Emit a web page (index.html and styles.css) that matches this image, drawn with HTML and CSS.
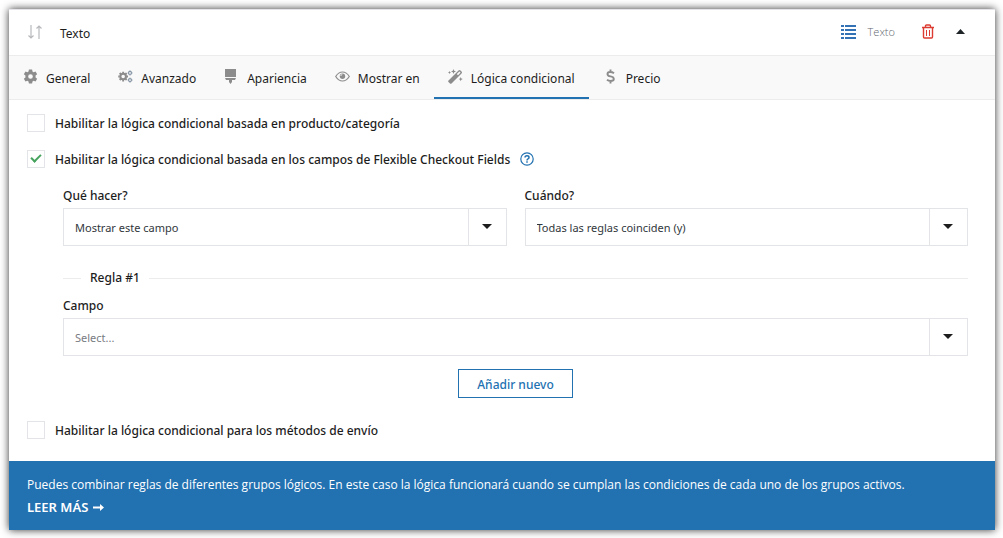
FILE: index.html
```html
<!DOCTYPE html>
<html lang="es">
<head>
    <meta charset="UTF-8">
    <meta name="viewport" content="width=device-width, initial-scale=1.0">
    <title>Flexible Checkout Fields</title>
    <link rel="stylesheet" href="styles.css">
</head>
<body>

<div class="field-card">
    <header class="field-header">
        <svg class="sort-icon" viewBox="0 0 16 16" width="16" height="16" fill="none" stroke="#b8b9bc">
            <path d="M4 1v13M1.500 11.500l2.500 2.500 2.500-2.500M12 15V2M9.500 4.500L12 2l2.500 2.500" stroke-width="1.200"/>
        </svg>
        <span class="field-name">Texto</span>
        <svg class="list-icon" viewBox="0 0 15 15" width="15" height="15" fill="#3372b5">
            <path d="M0 1h3v2H0zM4 1h11v2H4zM0 5h3v2H0zM4 5h11v2H4zM0 9h3v2H0zM4 9h11v2H4zM0 13h3v2H0zM4 13h11v2H4z"/>
        </svg>
        <span class="field-type">Texto</span>
        <button class="icon-btn delete-btn" type="button" aria-label="Eliminar">
            <svg viewBox="0 0 14 15" width="14" height="15" fill="none" stroke="#dc3c32">
                <path d="M1 3.500h12M4.500 3V2q0-1 1-1h3q1 0 1 1v1" stroke-width="1.400"/>
                <path d="M2.500 4v9q0 1 1 1h7q1 0 1-1V4" stroke-width="1.400"/>
                <path d="M5.500 6v6M8.500 6v6"/>
            </svg>
        </button>
        <button class="icon-btn" type="button" aria-label="Cerrar">
            <svg viewBox="0 0 9 5" width="9" height="5" fill="#1d2327"><path d="M0 5L4.500 0 9 5z"/></svg>
        </button>
    </header>

    <nav class="tabs">
        <a class="tab" href="#general">
            <svg viewBox="0 0 16 16" width="15" height="15" fill="#8c8c8c">
                <path fill-rule="evenodd" d="M6.300.5h3.400l.4 2.200 1.200.7 2.100-.8 1.700 2.900L13.400 7v2l1.700 1.500-1.700 2.900-2.100-.8-1.200.7-.4 2.200H6.300l-.4-2.200-1.200-.7-2.100.8-1.700-2.900L2.600 9V7L.9 5.500l1.700-2.900 2.100.8 1.200-.7zM8 5.500a2.500 2.500 0 1 0 0 5 2.500 2.500 0 0 0 0-5z"/>
            </svg>
            General
        </a>
        <a class="tab" href="#avanzado">
            <svg viewBox="0 0 16 16" width="15" height="15" fill="none" stroke="#8c8c8c">
                <circle cx="5.500" cy="8" r="3" stroke-width="2.200"/>
                <path d="M5.500 2.800v1.500M5.500 11.700v1.500M.3 8h1.500M9.200 8h1.500M1.800 4.300l1.100 1.100M8.100 10.600l1.100 1.100M1.800 11.700l1.100-1.100M8.100 5.400l1.100-1.100" stroke-width="2"/>
                <circle cx="12.800" cy="4.200" r="1.600" stroke="#8796a6" stroke-width="1.300"/>
                <circle cx="12.800" cy="11.800" r="1.600" stroke="#8796a6" stroke-width="1.300"/>
                <path d="M12.800 1.500v1M12.800 6v1M10.300 4.200h1M14.500 4.200h1M12.800 9.200v1M12.800 13.500v1M10.300 11.800h1M14.500 11.800h1" stroke="#8796a6"/>
            </svg>
            Avanzado
        </a>
        <a class="tab" href="#apariencia">
            <svg viewBox="0 0 15 15" width="15" height="15" fill="#8c8c8c">
                <path d="M1 0h11v8H1zM1 9h11l-1 2H8v2l-1.500 2L5 13v-2H2z"/>
            </svg>
            Apariencia
        </a>
        <a class="tab" href="#mostrar">
            <svg viewBox="0 0 15 15" width="15" height="15" fill="none" stroke="#8c8c8c">
                <path d="M.7 7.500Q3.500 3 7.500 3t6.800 4.500Q11.500 12 7.500 12T.7 7.500z" stroke-width="1.200"/>
                <circle cx="7.500" cy="7.200" r="2.700" fill="#8c8c8c" stroke="none"/>
                <path d="M5.800 7a1.500 1.500 0 0 1 1.500-1.500" stroke="#f9f9f9" stroke-width=".8"/>
            </svg>
            Mostrar en
        </a>
        <a class="tab tab-active" href="#logica">
            <svg viewBox="0 0 15 15" width="15" height="15" fill="#8c8c8c">
                <path fill-rule="evenodd" d="M.5 11.500L10.500 1.500q1-1 2 0l1 1q1 1 0 2L3.500 14.500q-.8.700-1.500 0l-1.500-1.500q-.7-.8 0-1.500zM8.800 5l1.200 1.200L12.600 3.600 11.400 2.400z"/>
                <path d="M5.500 0l.7 1.800L8 2.500l-1.800.7L5.500 5l-.7-1.800L3 2.500l1.800-.7zM1.500 2l.5 1 1 .5-1 .5-.5 1-.5-1-1-.5 1-.5zM12.700 8l.6 1.500 1.500.6-1.500.6-.6 1.500-.6-1.500-1.500-.6 1.500-.6z"/>
            </svg>
            Lógica condicional
        </a>
        <a class="tab" href="#precio">
            <svg viewBox="0 0 15 15" width="15" height="15" fill="none" stroke="#8c8c8c" stroke-width="1.900">
                <path d="M11 4.200Q9.500 3 7 3 4.500 3 4.500 5T7.500 7.400 10.800 9.800 7.500 12Q5.500 12 4 10.800M7.500.5V3M7.500 12v2.500"/>
            </svg>
            Precio
        </a>
    </nav>

    <main class="settings">
        <div class="check-row">
            <input type="checkbox" id="by-product">
            <label for="by-product">Habilitar la lógica condicional basada en producto/categoría</label>
        </div>
        <div class="check-row">
            <input type="checkbox" id="by-fields" checked>
            <label for="by-fields">Habilitar la lógica condicional basada en los campos de Flexible Checkout Fields</label>
            <a class="help" href="#ayuda" aria-label="Ayuda">
                <svg viewBox="0 0 14 14" width="14" height="14" fill="none" stroke="#2271b1">
                    <circle cx="7" cy="7" r="6.200" stroke-width="1.200"/>
                    <path d="M5 5.600Q5 3.800 7 3.800t2 1.600Q9 6.400 8 6.900 7 7.400 7 8.400M7 9.300v1.500" stroke-width="1.500"/>
                </svg>
            </a>
        </div>

        <section class="rules">
            <div class="rule-columns">
                <div class="form-group">
                    <label for="action">Qué hacer?</label>
                    <div class="select-box">
                        <select id="action"><option>Mostrar este campo</option></select>
                    </div>
                </div>
                <div class="form-group">
                    <label for="condition">Cuándo?</label>
                    <div class="select-box">
                        <select id="condition"><option>Todas las reglas coinciden (y)</option></select>
                    </div>
                </div>
            </div>

            <h3 class="rule-title">Regla #1</h3>

            <div class="form-group">
                <label for="field">Campo</label>
                <div class="select-box">
                    <select id="field" class="placeholder"><option>Select...</option></select>
                </div>
            </div>

            <button class="add-btn" type="button">Añadir nuevo</button>
        </section>

        <div class="check-row">
            <input type="checkbox" id="by-shipping">
            <label for="by-shipping">Habilitar la lógica condicional para los métodos de envío</label>
        </div>
    </main>

    <footer class="notice">
        <p>Puedes combinar reglas de diferentes grupos lógicos. En este caso la lógica funcionará cuando se cumplan las condiciones de cada uno de los grupos activos.</p>
        <a class="read-more" href="#leer-mas">
            LEER MÁS
            <svg viewBox="0 0 11 7" width="11" height="7" fill="#ffffff"><path d="M0 2.500h7V0l4 3.500L7 7V4.500H0z"/></svg>
        </a>
    </footer>
</div>

</body>
</html>
```

FILE: styles.css
```css
* {
    box-sizing: border-box;
}
body {
    margin: 0;
    padding: 9px 8px 8px 9px;
    background-color: #ffffff;
    font-family: "Segoe UI", "Noto Sans", "Open Sans", sans-serif;
    font-size: 12px;
    font-weight: 500;
    line-height: 18px;
    color: #1d1d1d;
}
a {
    text-decoration: none;
}
svg {
    display: block;
    flex-shrink: 0;
}

.field-card {
    background-color: #ffffff;
    box-shadow: 0 0 8px rgba(0, 0, 0, 0.8);
}

/* Header */
.field-header {
    display: flex;
    align-items: center;
    height: 47px;
    padding: 0 30px 2px 18px;
    border-top: 1px solid #e2e4e7;
    border-bottom: 1px solid #ececec;
}
.field-name {
    flex: 1;
    padding-top: 4px;
    margin-left: 17px;
    font-weight: 400;
}
.field-type {
    margin: 0 26px 0 12px;
    font-family: "Open Sans", sans-serif;
    font-size: 11px;
    font-weight: 300;
    color: #646970;
}
.icon-btn {
    padding: 0;
    border: none;
    background: none;
    cursor: pointer;
}
.delete-btn {
    margin-right: 21px;
}

/* Tabs */
.tabs {
    display: flex;
    height: 44px;
    background-color: #f9f9f9;
    border-bottom: 1px solid #ececec;
}
.tab {
    display: flex;
    align-items: center;
    gap: 8px;
    padding: 4px 14px 0;
    border-bottom: 2px solid transparent;
    font-weight: 400;
    color: #1d1d1d;
}
.tab svg {
    margin-bottom: 4px;
}
.tab-active {
    border-bottom-color: #2271b1;
}

/* Form */
.settings {
    display: flex;
    flex-direction: column;
    gap: 16px;
    padding: 13px 27px 21px 18px;
}
.check-row {
    display: flex;
    align-items: center;
    gap: 10px;
}
.check-row label {
    padding-top: 2px;
}
.check-row input {
    appearance: none;
    display: grid;
    place-items: center;
    width: 18px;
    height: 18px;
    margin: 0;
    border: 1px solid #e2e4e7;
    background-color: #ffffff;
}
.check-row input:checked::before {
    content: "";
    width: 8px;
    height: 4px;
    margin-bottom: 4px;
    border-left: 2px solid #46a35e;
    border-bottom: 2px solid #46a35e;
    transform: rotate(-45deg);
}
.rules {
    display: flex;
    flex-direction: column;
    margin: 1px 0 6px 36px;
}
.rule-columns {
    display: grid;
    grid-template-columns: 1fr 1fr;
    gap: 18px;
}
.form-group label {
    display: block;
    padding-top: 1px;
    margin-bottom: 3px;
}
.select-box {
    position: relative;
}
.select-box select {
    appearance: none;
    display: block;
    width: 100%;
    height: 38px;
    padding: 0 50px 0 11px;
    border: 1px solid #e2e4e7;
    border-radius: 0;
    background-color: #ffffff;
    font-family: inherit;
    font-size: 11px;
    color: #32373c;
}
.select-box select.placeholder {
    color: #787c82;
}
/* Divider and arrow at the right of the select */
.select-box::before {
    content: "";
    position: absolute;
    top: 0;
    right: 38px;
    height: 100%;
    border-left: 1px solid #e2e4e7;
}
.select-box::after {
    content: "";
    position: absolute;
    top: 16px;
    right: 15px;
    border: 5px solid transparent;
    border-top-color: #1d1d1d;
    border-bottom: none;
    pointer-events: none;
}
.rule-title {
    display: flex;
    align-items: center;
    gap: 9px;
    margin: 23px 0 9px;
    font-size: 12px;
    font-weight: 500;
}
.rule-title::before,
.rule-title::after {
    content: "";
    width: 18px;
    border-top: 1px solid #ececec;
}
.rule-title::after {
    flex: 1;
}
.add-btn {
    align-self: center;
    height: 29px;
    margin-top: 13px;
    padding: 1px 18px 0;
    border: 1px solid #2271b1;
    background-color: #ffffff;
    font-family: inherit;
    font-size: 12px;
    font-weight: 500;
    color: #2271b1;
    cursor: pointer;
}

/* Bottom notice */
.notice {
    padding: 12px 18px 11px;
    background-color: #2271b1;
    line-height: 23px;
    color: #ffffff;
}
.notice p {
    margin: 0;
    font-family: "Segoe UI", "Open Sans", sans-serif;
    font-weight: 400;
}
.read-more {
    display: flex;
    align-items: center;
    gap: 5px;
    font-size: 13px;
    font-weight: 600;
    color: #ffffff;
}
```
